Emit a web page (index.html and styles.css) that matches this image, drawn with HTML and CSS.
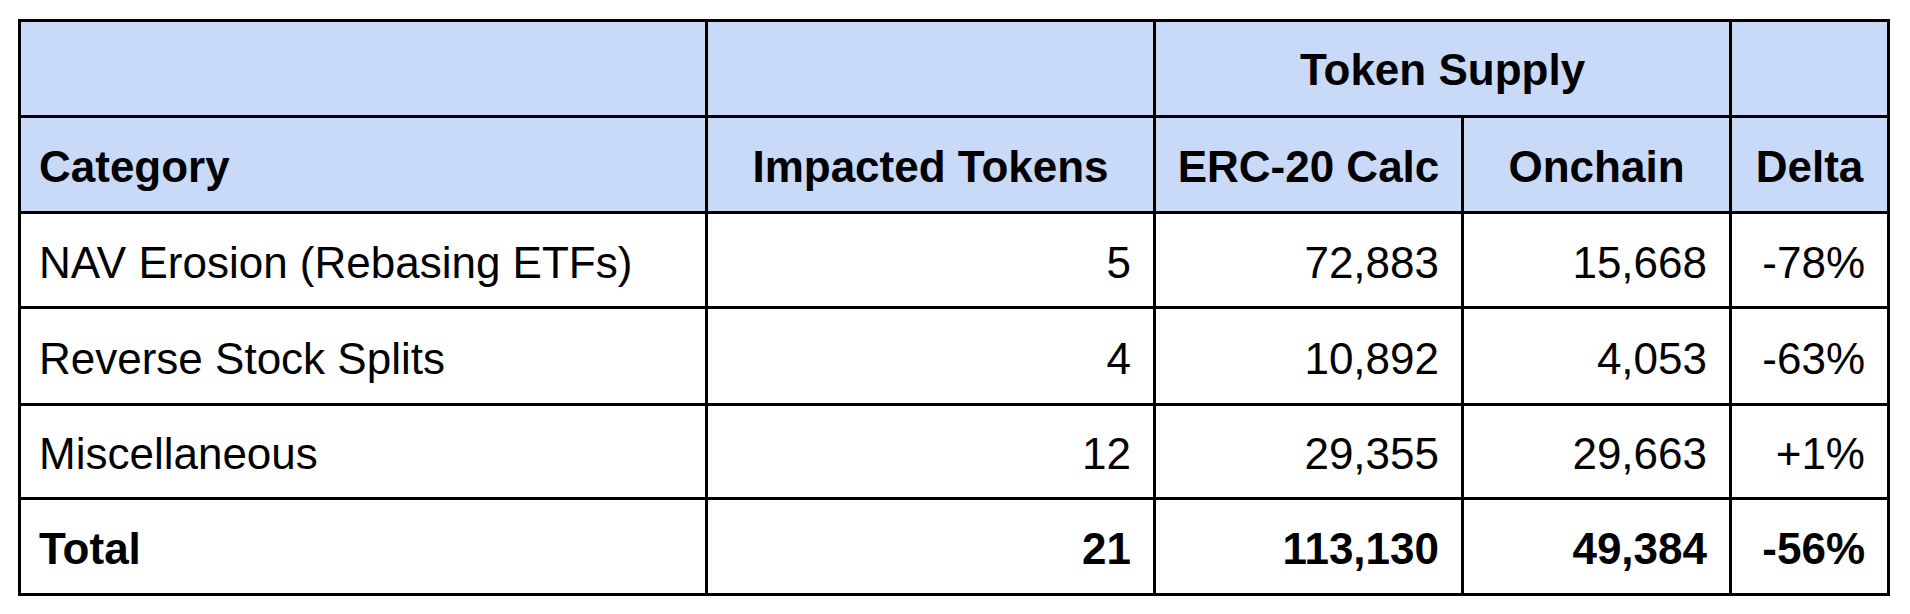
FILE: index.html
```html
<!DOCTYPE html>
<html lang="en">
<head>
<meta charset="utf-8">
<title>Token Supply</title>
<link rel="stylesheet" href="styles.css">
</head>
<body>
<div class="sheet" role="table">
  <div class="cell head" role="columnheader"></div>
  <div class="cell head" role="columnheader"></div>
  <div class="cell head span2" role="columnheader">Token Supply</div>
  <div class="cell head" role="columnheader"></div>

  <div class="cell head left" role="columnheader">Category</div>
  <div class="cell head" role="columnheader">Impacted Tokens</div>
  <div class="cell head" role="columnheader">ERC-20 Calc</div>
  <div class="cell head" role="columnheader">Onchain</div>
  <div class="cell head" role="columnheader">Delta</div>

  <div class="cell" role="cell">NAV Erosion (Rebasing ETFs)</div>
  <div class="cell num" role="cell">5</div>
  <div class="cell num" role="cell">72,883</div>
  <div class="cell num" role="cell">15,668</div>
  <div class="cell num" role="cell">-78%</div>

  <div class="cell" role="cell">Reverse Stock Splits</div>
  <div class="cell num" role="cell">4</div>
  <div class="cell num" role="cell">10,892</div>
  <div class="cell num" role="cell">4,053</div>
  <div class="cell num" role="cell">-63%</div>

  <div class="cell" role="cell">Miscellaneous</div>
  <div class="cell num" role="cell">12</div>
  <div class="cell num" role="cell">29,355</div>
  <div class="cell num" role="cell">29,663</div>
  <div class="cell num" role="cell">+1%</div>

  <div class="cell total" role="cell">Total</div>
  <div class="cell num total" role="cell">21</div>
  <div class="cell num total" role="cell">113,130</div>
  <div class="cell num total" role="cell">49,384</div>
  <div class="cell num total" role="cell">-56%</div>
</div>
</body>
</html>
```

FILE: styles.css
```css
html, body {
  margin: 0;
  background: #ffffff;
}

body {
  padding: 19px 0 0 18px;
  font-family: "Liberation Sans", Arial, sans-serif;
  color: #000000;
}

.sheet {
  display: grid;
  grid-template-columns: 684px 445px 305px 265px 155px;
  grid-template-rows: 93px 93px 92px 94px 91px 93px;
  gap: 3px;
  padding: 3px;
  background: #000000;
  width: max-content;
}

.cell {
  background: #ffffff;
  display: flex;
  align-items: center;
  padding: 6px 22px 0 18px;
  font-size: 44px;
  line-height: 1.15;
  white-space: nowrap;
  overflow: hidden;
}

.head {
  background: #c9daf8;
  font-weight: bold;
  justify-content: center;
  padding-left: 20px;
  padding-right: 20px;
}

.head.left {
  justify-content: flex-start;
  padding-left: 18px;
}

.span2 {
  grid-column: span 2;
  padding-top: 3px;
}

.num {
  justify-content: flex-end;
}

.total {
  font-weight: bold;
}
```
